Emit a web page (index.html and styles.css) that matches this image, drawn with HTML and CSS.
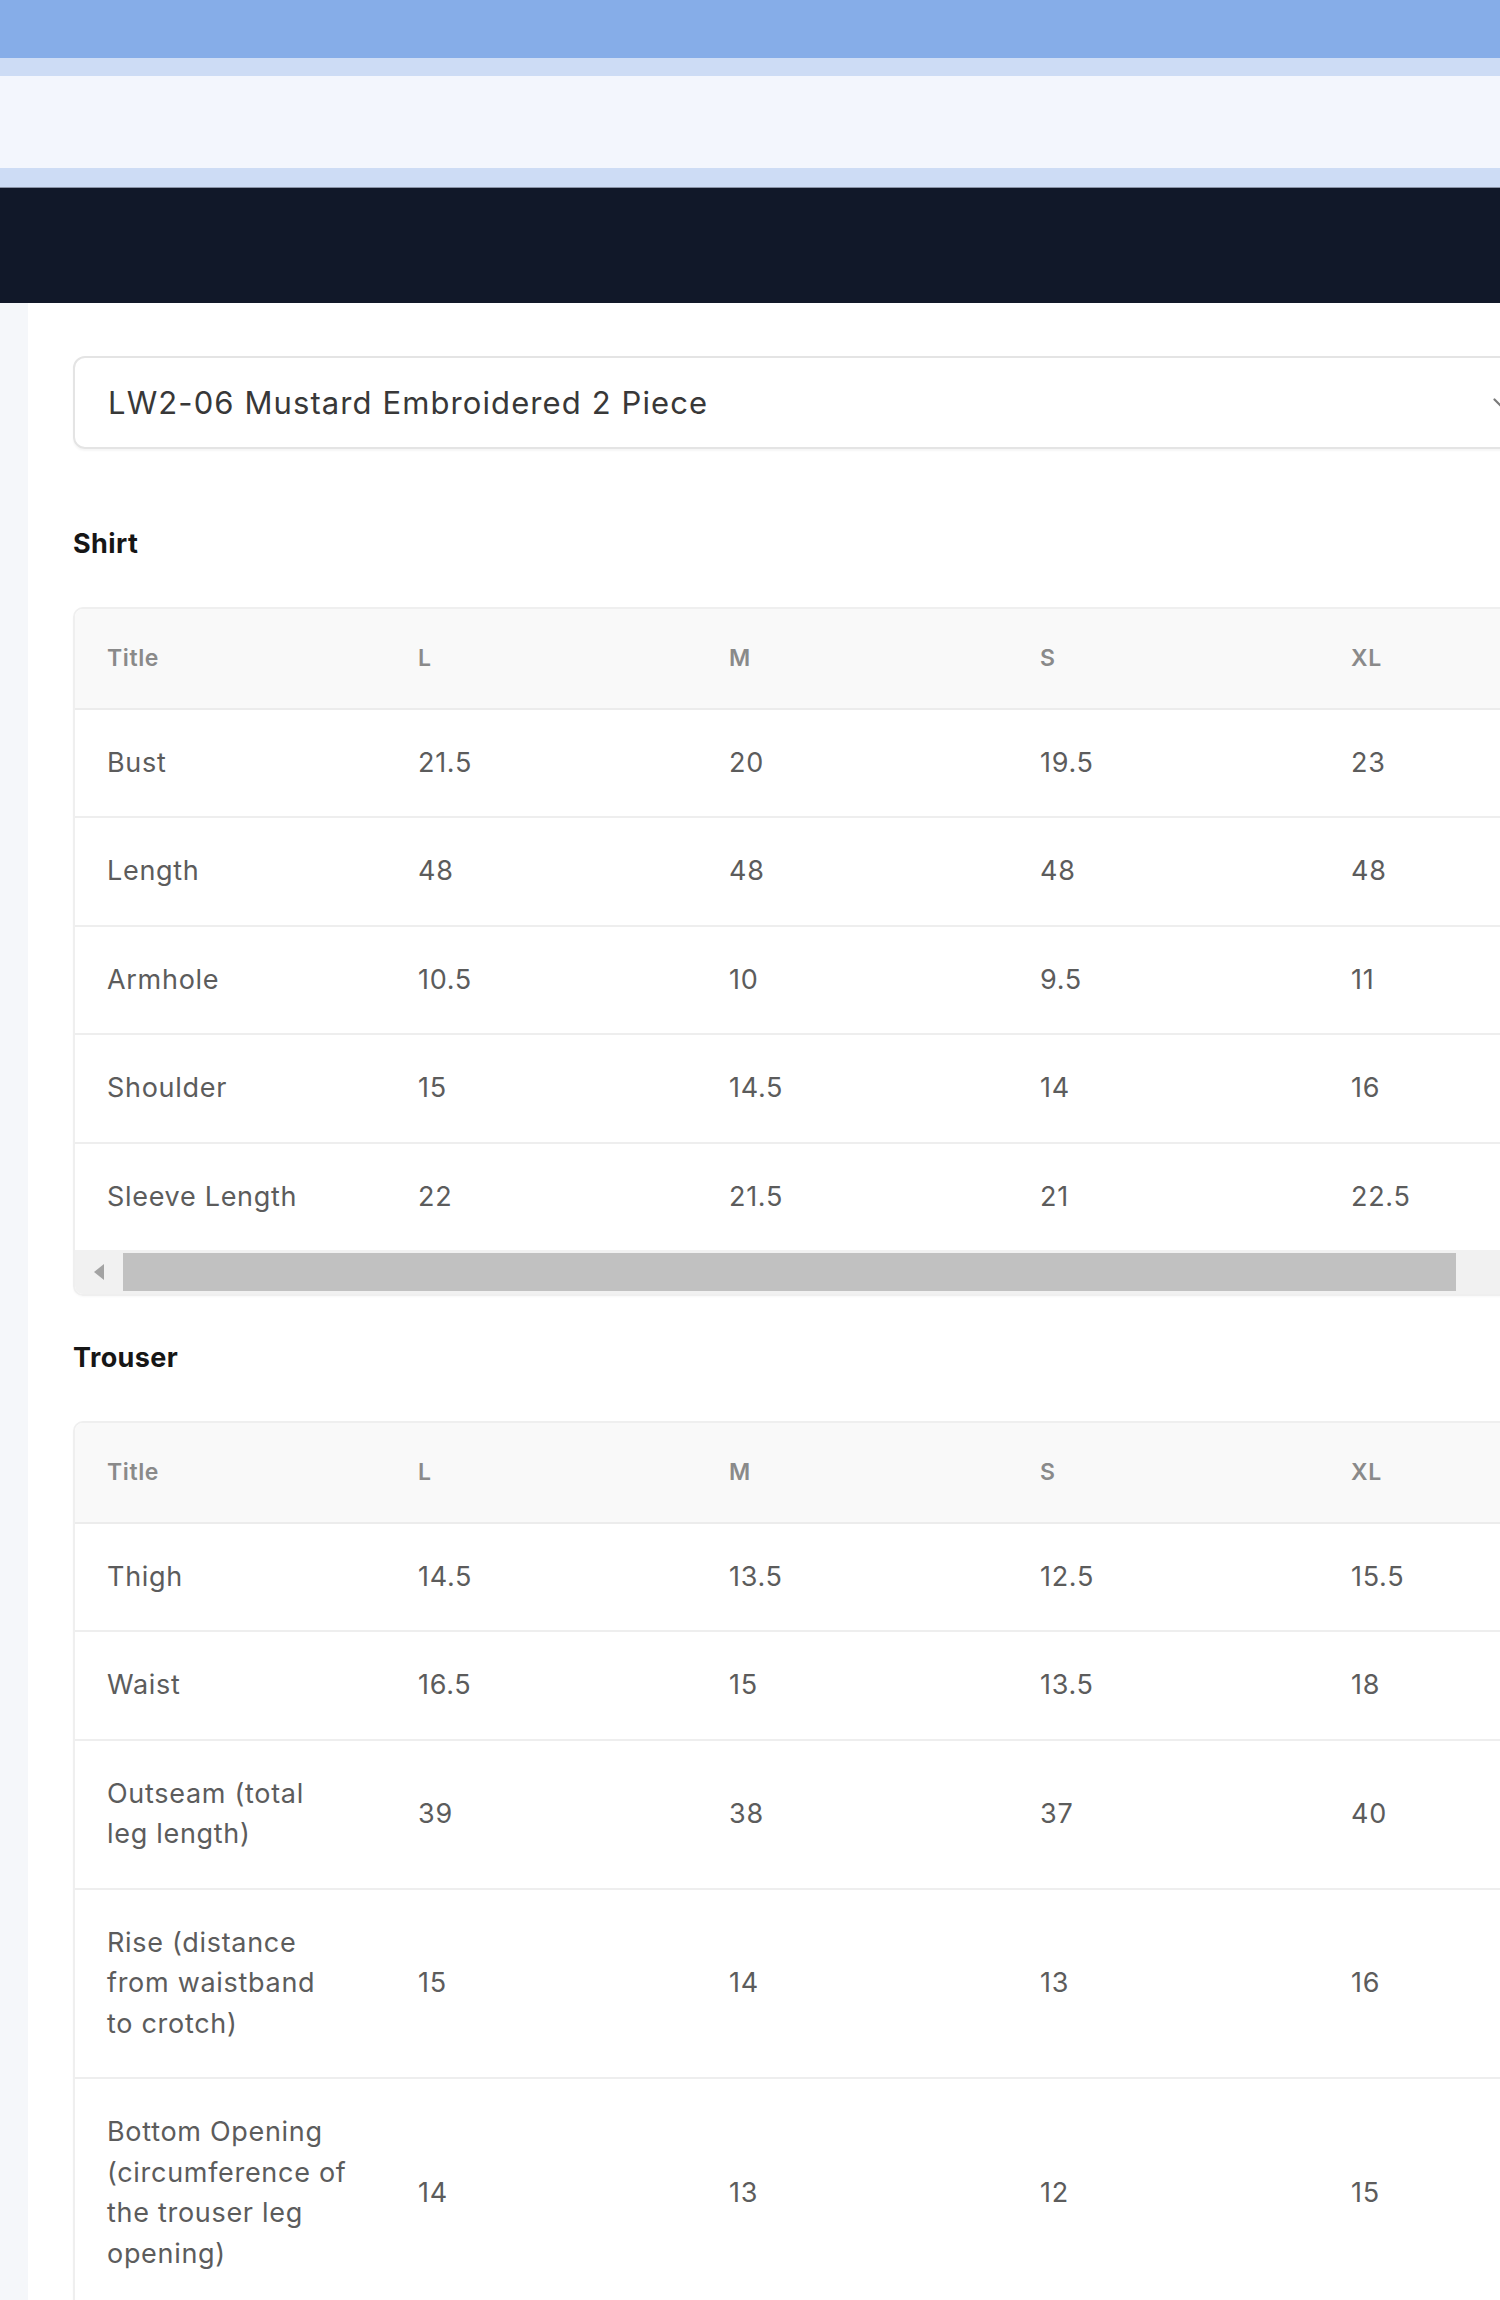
FILE: index.html
```html
<!DOCTYPE html>
<html lang="en">
<head>
<meta charset="utf-8">
<title>Size Chart</title>
<link rel="stylesheet" href="styles.css">
</head>
<body>
<header class="topbar">
  <div class="bar bar-blue"></div>
  <div class="bar bar-light"></div>
  <div class="bar bar-pale"></div>
  <div class="bar bar-light bar-light-2"></div>
  <div class="bar bar-navy"></div>
</header>
<div class="page">
  <aside class="rail"></aside>
  <main class="main">
    <div class="content">
      <div class="select">
        <span class="select-text">LW2-06 Mustard Embroidered 2 Piece</span>
        <svg class="chevron" width="16" height="10" viewBox="0 0 16 10"><path d="M1.5 1.5 L8 8 L14.5 1.5" fill="none" stroke="#7a7a7a" stroke-width="2.2" stroke-linecap="round" stroke-linejoin="round"/></svg>
      </div>

      <h2 class="section-title section-first">Shirt</h2>
      <div class="table-card">
        <div class="table-scroll">
          <table class="size-table">
            <thead>
              <tr><th>Title</th><th>L</th><th>M</th><th>S</th><th>XL</th></tr>
            </thead>
            <tbody>
              <tr><td>Bust</td><td>21.5</td><td>20</td><td>19.5</td><td>23</td></tr>
              <tr><td>Length</td><td>48</td><td>48</td><td>48</td><td>48</td></tr>
              <tr><td>Armhole</td><td>10.5</td><td>10</td><td>9.5</td><td>11</td></tr>
              <tr><td>Shoulder</td><td>15</td><td>14.5</td><td>14</td><td>16</td></tr>
              <tr><td>Sleeve Length</td><td>22</td><td>21.5</td><td>21</td><td>22.5</td></tr>
            </tbody>
          </table>
        </div>
        <div class="scrollbar">
          <div class="sb-btn"><span class="sb-arrow"></span></div>
          <div class="sb-thumb"></div>
        </div>
      </div>

      <h2 class="section-title">Trouser</h2>
      <div class="table-card">
        <div class="table-scroll">
          <table class="size-table">
            <thead>
              <tr><th>Title</th><th>L</th><th>M</th><th>S</th><th>XL</th></tr>
            </thead>
            <tbody>
              <tr><td>Thigh</td><td>14.5</td><td>13.5</td><td>12.5</td><td>15.5</td></tr>
              <tr><td>Waist</td><td>16.5</td><td>15</td><td>13.5</td><td>18</td></tr>
              <tr><td>Outseam (total leg length)</td><td>39</td><td>38</td><td>37</td><td>40</td></tr>
              <tr><td>Rise (distance from waistband to crotch)</td><td>15</td><td>14</td><td>13</td><td>16</td></tr>
              <tr><td>Bottom Opening (circumference of the trouser leg opening)</td><td>14</td><td>13</td><td>12</td><td>15</td></tr>
            </tbody>
          </table>
        </div>
        <div class="scrollbar">
          <div class="sb-btn"><span class="sb-arrow"></span></div>
          <div class="sb-thumb"></div>
        </div>
      </div>
    </div>
  </main>
</div>
</body>
</html>
```

FILE: styles.css
```css
html, body {
  margin: 0;
  padding: 0;
  overflow: hidden;
  background: #ffffff;
}
body {
  font-family: Inter, "Noto Sans", "Liberation Sans", sans-serif;
  color: #5c5c5c;
}

.topbar {
  display: flex;
  flex-direction: column;
}
.bar { width: 100%; }
.bar-blue { height: 58px; background: #86ade8; }
.bar-light { height: 18px; background: #cddcf5; }
.bar-light-2 { height: 19px; border-bottom: 1px solid #8a93a6; }
.bar-pale { height: 92px; background: #f3f6fd; }
.bar-navy { height: 115px; background: #111829; }

.page {
  display: flex;
  min-height: 2000px;
}
.rail {
  width: 28px;
  flex: 0 0 28px;
  background: #f5f7fa;
}
.main {
  flex: 1;
  padding: 53px 0 0 45px;
  background: #ffffff;
}
.content {
  width: 1452px;
}

.select {
  box-sizing: border-box;
  height: 93px;
  border: 2px solid #e4e4e4;
  border-radius: 12px;
  box-shadow: 0 2px 2px rgba(0,0,0,0.04);
  display: flex;
  align-items: center;
  justify-content: space-between;
  padding: 0 14px 0 33px;
}
.select-text {
  font-size: 31px;
  color: #383838;
  letter-spacing: 1.1px;
}
.chevron { display: block; }

.section-title {
  margin: 42px 0 42px;
  font-size: 27px;
  line-height: 40.5px;
  font-weight: 700;
  color: #161616;
  letter-spacing: 0.4px;
}
.section-first { margin-top: 75px; }

.table-card {
  border: 2px solid #efefef;
  border-radius: 10px;
  overflow: hidden;
  box-shadow: 0 1px 2px rgba(0,0,0,0.03);
}
.table-scroll {
  overflow: hidden;
}
.size-table {
  width: 1555px;
  table-layout: fixed;
  border-collapse: collapse;
}
.size-table th,
.size-table td {
  text-align: left;
  padding: 0 32px;
  vertical-align: middle;
}
.size-table th {
  background: #f9f9f9;
  color: #8a8a8a;
  font-weight: 600;
  font-size: 23px;
  line-height: 33px;
  letter-spacing: 0.6px;
  padding-top: 33px;
  padding-bottom: 33px;
  border-bottom: 2px solid #ececec;
}
.size-table td {
  font-size: 27px;
  line-height: 40.5px;
  letter-spacing: 0.7px;
  padding-top: 33px;
  padding-bottom: 33px;
  padding-right: 39px;
  border-bottom: 2px solid #eeeeee;
  color: #5c5c5c;
}
.size-table tbody tr:last-child td { border-bottom: 0; }

.scrollbar {
  height: 44px;
  background: #f1f1f1;
  display: flex;
  align-items: center;
}
.sb-btn {
  width: 48px;
  flex: 0 0 48px;
  height: 44px;
  display: flex;
  align-items: center;
  justify-content: center;
}
.sb-arrow {
  width: 0;
  height: 0;
  border-top: 8px solid transparent;
  border-bottom: 8px solid transparent;
  border-right: 10px solid #a3a3a3;
}
.sb-thumb {
  width: 1333px;
  height: 38px;
  background: #c1c1c1;
}
```
